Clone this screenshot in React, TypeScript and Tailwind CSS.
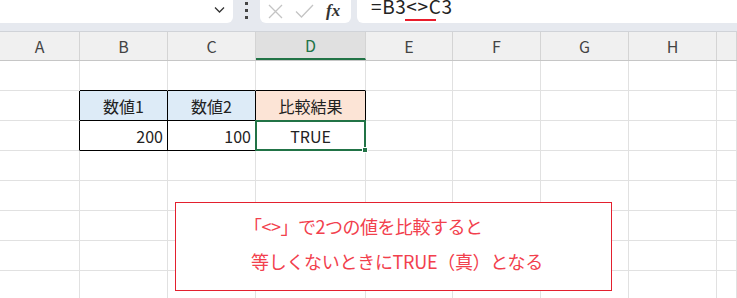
import React from 'react';

const cols = ['A', 'B', 'C', 'D', 'E', 'F', 'G', 'H', ''];
const grid = 'grid grid-cols-[80px_88px_88px_110px_87px_88px_88px_88px_1fr]';

function Cell({ className = '', children }: { className?: string; children?: React.ReactNode }) {
  return <div className={`h-[30px] border-r border-b border-[#e1e1e1] flex items-center ${className}`}>{children}</div>;
}

function App() {
  return (
    <div className="relative w-[737px] h-[298px] overflow-hidden bg-white font-['Noto_Sans_CJK_JP','Noto_Sans',sans-serif] text-[#222]">
      {/* formula bar */}
      <div className="flex h-[32px] bg-[#e6e9ef] border-b border-[#d0d3d8]">
        <div className="w-[233px] h-[23px] bg-white rounded-br-md flex justify-end items-start pr-[8px] pt-[5px]">
          <svg width="11" height="8" viewBox="0 0 11 8" className="mt-[1px]">
            <path d="M1 1.5 L5.5 6 L10 1.5" fill="none" stroke="#333" strokeWidth="1.3" />
          </svg>
        </div>
        <div className="w-[27px] flex flex-col items-center gap-[4px] pt-[2px]">
          <span className="w-[3px] h-[3px] bg-[#444]" />
          <span className="w-[3px] h-[3px] bg-[#444]" />
          <span className="w-[3px] h-[3px] bg-[#444]" />
        </div>
        <div className="w-[91px] h-[23px] bg-white rounded-b-md flex items-center pl-[8px] gap-[12px]">
          <svg width="15" height="15" viewBox="0 0 15 15">
            <path d="M1 1 L14 14 M14 1 L1 14" stroke="#c4c4c4" strokeWidth="1.3" />
          </svg>
          <svg width="19" height="15" viewBox="0 0 19 15">
            <path d="M1 7.5 L6.5 13 L18 1" fill="none" stroke="#c4c4c4" strokeWidth="1.3" />
          </svg>
          <span className="font-['Liberation_Serif',serif] italic font-bold text-[17px] leading-none text-[#333] -mt-[3px]">fx</span>
        </div>
        <div className="ml-[6px] flex-1 h-[23px] bg-white rounded-bl-md relative">
          <span className="absolute left-[14px] -top-[7px] text-[19px] leading-[26px] text-[#222] tracking-[0.6px]">=B3&lt;&gt;C3</span>
          <span className="absolute left-[48px] top-[19px] w-[31px] h-[2px] bg-[#e81c2b]" />
        </div>
      </div>

      {/* column headers */}
      <div className={`${grid} h-[29px] bg-[#f0f0f0] border-b border-[#c6c6c6] text-[16px] text-[#444]`}>
        {cols.map((c, i) => (
          <div
            key={i}
            className={`flex items-center justify-center border-r border-[#d4d4d4] ${c === 'D' ? 'bg-[#e0e0e0] text-[#217346] border-b-2 border-b-[#217346]' : ''}`}
          >
            {c}
          </div>
        ))}
      </div>

      {/* sheet rows */}
      <div className={`${grid} text-[16px]`}>
        {/* row 1 */}
        {cols.map((_, i) => (
          <Cell key={'r1' + i} className={i >= 1 && i <= 3 ? 'border-b-black' : ''} />
        ))}

        {/* row 2 */}
        <Cell className="border-r-black" />
        <Cell className="bg-[#ddebf7] border-r-black border-b-black justify-center">数値1</Cell>
        <Cell className="bg-[#ddebf7] border-r-black border-b-black justify-center">数値2</Cell>
        <Cell className="bg-[#fce4d6] border-r-black border-b-black justify-center">比較結果</Cell>
        {cols.slice(4).map((_, i) => (
          <Cell key={'r2' + i} />
        ))}

        {/* row 3 */}
        <Cell className="border-r-black" />
        <Cell className="border-r-black border-b-black justify-end pr-[4px]">200</Cell>
        <Cell className="border-r-black border-b-black justify-end pr-[4px]">100</Cell>
        <Cell className="relative border-r-black border-b-black justify-center">
          TRUE
          <span className="absolute -left-[1px] -top-[1px] -right-[1px] -bottom-[1px] border-2 border-[#217346]" />
          <span className="absolute -right-[3px] -bottom-[3px] w-[6px] h-[6px] bg-[#217346] border border-white" />
        </Cell>
        {cols.slice(4).map((_, i) => (
          <Cell key={'r3' + i} />
        ))}

        {/* empty rows */}
        {Array.from({ length: 5 }).flatMap((_, r) =>
          cols.map((_, i) => <Cell key={`e${r}-${i}`} />)
        )}
      </div>

      {/* callout shape */}
      <div className="absolute left-[175px] top-[202px] w-[437px] h-[89px] bg-white border border-[#e3202e] pl-[75px] pt-[6px] text-[18px] leading-[35px] text-[#f2404d]">
        <p className="-ml-[7px] tracking-[-0.5px]">「&lt;&gt;」で2つの値を比較すると</p>
        <p className="tracking-[-0.3px]">等しくないときにTRUE（真）となる</p>
      </div>
    </div>
  );
}

export default App;
